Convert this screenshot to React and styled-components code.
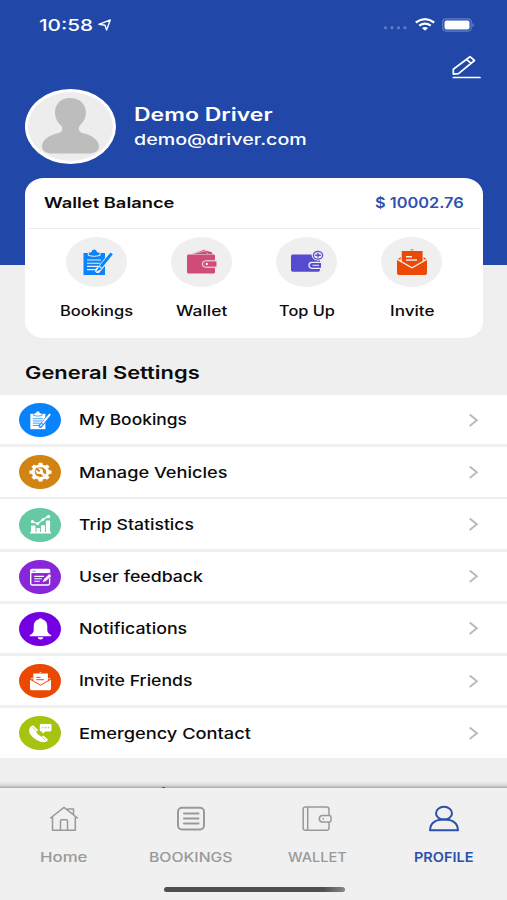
import React, { useLayoutEffect, useRef, useState } from "react";
import styled, { createGlobalStyle } from "styled-components";

const BLUE = "#2148a8";
const PAGE = "#efefef";

const GlobalStyle = createGlobalStyle`
  * { box-sizing: border-box; }
  html, body { margin: 0; padding: 0; overflow: hidden; }
  body { background: ${PAGE}; font-family: Inter, "Open Sans", sans-serif; color: #0b0b0b; }
  svg { display: block; flex: none; overflow: visible; }
`;

const Screen = styled.div`
  width: 507px;
  height: 900px;
  display: flex;
  flex-direction: column;
  overflow: hidden;
  background: ${PAGE};
`;

const TextBox = styled.span`
  display: block;
  flex: none;
  width: ${(p) => p.$width}px;
  height: ${(p) => p.$line || 20}px;
  line-height: ${(p) => p.$line || 20}px;
  font-size: ${(p) => p.$size}px;
  font-weight: ${(p) => p.$weight || 500};
  color: ${(p) => p.$color || "inherit"};
  white-space: nowrap;
`;

const TextRun = styled.span`
  display: inline-block;
  transform-origin: 0 50%;
`;

/* Widens a line of text so that it fills the given width. */
function WideText({ children, width, size, line, weight, color }) {
  const ref = useRef(null);
  const [scale, setScale] = useState(1);
  useLayoutEffect(() => {
    setScale(width / ref.current.offsetWidth);
  }, [width, children]);
  return (
    <TextBox $width={width} $size={size} $line={line} $weight={weight} $color={color}>
      <TextRun ref={ref} style={{ transform: `scaleX(${scale})` }}>{children}</TextRun>
    </TextBox>
  );
}

const Header = styled.header`
  flex: none;
  height: 264.5px;
  background: ${BLUE};
  color: #fff;
`;

const StatusBar = styled.div`
  height: 49px;
  padding: 0 32px 0 39px;
  display: flex;
  align-items: center;
  justify-content: space-between;
`;

const StatusGroup = styled.div`
  display: flex;
  align-items: center;
  gap: ${(p) => p.$gap}px;
`;

const EditRow = styled.div`
  height: 40px;
  padding: 6px 26px 0 0;
  display: flex;
  justify-content: flex-end;
`;

const ProfileRow = styled.div`
  display: flex;
  align-items: center;
  gap: 18px;
  padding-left: 25px;
`;

const Avatar = styled.div`
  width: 91px;
  height: 75px;
  border: 3px solid #fff;
  border-radius: 50%;
  background: #ededed;
  display: flex;
  justify-content: center;
  padding-top: 6px;
`;

const Identity = styled.div`
  display: flex;
  flex-direction: column;
  gap: 2px;
`;

const Card = styled.section`
  position: relative;
  flex: none;
  width: 458px;
  height: 160px;
  margin: -87px 0 0 25px;
  border-radius: 19px / 16px;
  background: #fff;
`;

const Balance = styled.div`
  height: 51px;
  margin: 0 3px;
  padding: 0 16px;
  display: flex;
  align-items: center;
  justify-content: space-between;
  border-bottom: 1px solid #ededed;
`;

const Actions = styled.div`
  display: grid;
  grid-template-columns: repeat(4, 105px);
  justify-content: center;
  padding-top: 8.5px;
`;

const Action = styled.div`
  display: flex;
  flex-direction: column;
  align-items: center;
  gap: 14px;
`;

const ActionDisc = styled.div`
  width: 61px;
  height: 50px;
  border-radius: 50%;
  background: #efefef;
  display: flex;
  align-items: center;
  justify-content: center;
  padding-left: ${(p) => p.$shift || 0}px;
`;

const SectionTitle = styled.h2`
  flex: none;
  height: 57.5px;
  margin: 0;
  padding: 25.5px 0 0 25px;
`;

const List = styled.div`
  flex: none;
  display: flex;
  flex-direction: column;
  gap: 2.8px;
`;

const Row = styled.div`
  height: 49.4px;
  padding: 0 28px 0 19px;
  display: flex;
  align-items: center;
  background: #fff;
`;

const RowLabel = styled.div`
  padding-top: 1.5px;
`;

const RowDisc = styled.div`
  width: 42px;
  height: 34px;
  margin: 1px 18px 0 0;
  border-radius: 50%;
  background: ${(p) => p.$color};
  display: flex;
  align-items: center;
  justify-content: center;
`;

const Spacer = styled.div`
  flex: 1;
`;

const ClippedSection = styled.div`
  flex: 1;
  background:
    linear-gradient(#555, #555) 162px 100% / 3px 1px no-repeat,
    linear-gradient(to bottom, transparent 23px, #dcdcdc 27px, #aaa 30px);
`;

const TabBar = styled.nav`
  flex: none;
  height: 112.5px;
  background: #f0f0f0;
`;

const Tabs = styled.div`
  display: grid;
  grid-template-columns: repeat(4, 1fr);
  height: 99px;
  padding-left: 1px;
`;

const Tab = styled.div`
  display: flex;
  flex-direction: column;
  align-items: center;
  gap: 15px;
  padding-top: 18px;
  color: ${(p) => (p.$active ? "#2b4fad" : "#999")};
`;

const HomeIndicator = styled.div`
  width: 181px;
  height: 5px;
  margin: 0 162px 0 164px;
  border-radius: 3px;
  background: linear-gradient(to right, #505050 88%, #888);
`;

function ClipboardIcon({ bg, ...rest }) {
  return (
    <svg viewBox="0 0 30 26" {...rest}>
      <path d="M.5 4H22V26H.5Z" fill="currentColor" />
      <path d="M5.3 6.5V3H8Q8.4 0 11.2 0T14.4 3H17V6.5Q11 8.2 5.3 6.5Z" fill="currentColor" stroke={bg} strokeWidth="1" />
      <path d="M4 11H18M4 14.2H17M4 17.4H15M4 20.6H12.5" stroke={bg} strokeWidth="1.1" />
      <path d="M29 4.5L15.8 20.5" stroke={bg} strokeWidth="5" />
      <circle cx="14.8" cy="21.3" r="2.8" fill={bg} />
      <path d="M28.7 4.4L17.8 17.8" stroke="currentColor" strokeWidth="3" />
      <path d="M16 17.8L18.4 20L13.2 22.8Z" fill="currentColor" />
    </svg>
  );
}

function PurseIcon({ bg, ...rest }) {
  return (
    <svg viewBox="0 0 30 26" {...rest}>
      <path d="M5 5L17.7 .6L20.5 5ZM18.5 1.5L25 3.3 25.3 5H21Z" fill="currentColor" />
      <path d="M6 4.8L19 1.5" stroke={bg} strokeWidth=".6" />
      <rect x="0" y="5.6" width="28" height="18.8" rx="1.5" fill="currentColor" />
      <path d="M30 11.8H18.5Q15.3 12 15.3 15T18.5 18.2H30Z" fill="currentColor" stroke={bg} strokeWidth="1" />
      <circle cx="19.8" cy="15" r="1.2" fill={bg} />
    </svg>
  );
}

function TopUpIcon({ bg, ...rest }) {
  return (
    <svg viewBox="0 0 30 26" {...rest}>
      <rect x="-1" y="5.5" width="29" height="17.2" rx="1.7" fill="currentColor" />
      <path d="M29 13.4H19.7Q17 13.6 17 16.3T19.7 19.3H29" fill="currentColor" stroke={bg} strokeWidth="1.3" />
      <path d="M20.5 16.3H27" stroke={bg} strokeWidth="1" />
      <ellipse cx="26" cy="6.2" rx="6.4" ry="5.5" fill={bg} />
      <ellipse cx="26" cy="6.2" rx="4.6" ry="3.9" fill="none" stroke="currentColor" strokeWidth="1.3" />
      <path d="M23.2 6.2H28.8M26 3.8V8.6" stroke="currentColor" strokeWidth="1.4" />
    </svg>
  );
}

function InviteIcon({ bg, ...rest }) {
  return (
    <svg viewBox="0 0 30 26" {...rest}>
      <path d="M13 1.3Q15 -.7 17 1.3ZM4.7 2H25.6V13L15 19L4.7 13Z" fill="currentColor" />
      <path d="M9 7.7H15M9 11H20" stroke={bg} strokeWidth="1.4" />
      <path d="M3.7 8L.3 10.5H3.7ZM26.6 8L30 10.5H26.6Z" fill="currentColor" />
      <path d="M0 10.7L15 19.2L30 10.7V24Q30 26 28 26H2Q0 26 0 24Z" fill="currentColor" />
      <path d="M.5 10.5L15 18.7L29.5 10.5" fill="none" stroke={bg} strokeWidth="1.2" />
    </svg>
  );
}

function GearIcon({ bg, ...rest }) {
  return (
    <svg viewBox="0 0 30 26" {...rest}>
      <g transform="translate(15 13) scale(1.18 1)">
        {[0, 45, 90, 135, 180, 225, 270, 315].map((a) => (
          <path key={a} transform={`rotate(${a})`} d="M-3 -8L-2.3 -13.3H2.3L3 -8Z" fill="currentColor" />
        ))}
        <circle r="10.7" fill="currentColor" />
        <circle r="7" fill={bg} />
        <path d="M-1 -1L6.5 6.5" stroke="currentColor" strokeWidth="3.4" />
        <circle cx="-1.3" cy="-1.3" r="4.2" fill="currentColor" />
        <path d="M-1 -1L-5.5 -5.5" stroke={bg} strokeWidth="2.6" />
      </g>
    </svg>
  );
}

function StatsIcon({ bg, ...rest }) {
  return (
    <svg viewBox="0 0 30 26" {...rest} fill="currentColor">
      <path d="M0 24.4H30V26.6H0ZM1.5 15H7.8V25H1.5ZM9.2 18.5H14.4V25H9.2ZM15.7 14.5H21.3V25H15.7ZM22.7 8H28.7V25H22.7Z" />
      <path d="M3.5 9.5L11 12.5L18.5 6.5L26 2" fill="none" stroke="currentColor" strokeWidth="1.8" />
      <circle cx="3.5" cy="9.5" r="2.3" /><circle cx="11" cy="12.5" r="2" />
      <circle cx="18.5" cy="6.5" r="2" /><circle cx="26.5" cy="2.2" r="2.4" />
    </svg>
  );
}

function FeedbackIcon({ bg, ...rest }) {
  return (
    <svg viewBox="0 0 30 26" {...rest} fill="none" stroke="currentColor">
      <rect x="1" y="2" width="27" height="22.3" rx="2" strokeWidth="2" />
      <path d="M1 5H28" strokeWidth="4.5" />
      <path d="M3.5 4.5H8" stroke={bg} strokeWidth="1" />
      <path d="M6 12H20M6 15.5H17M6 19H14" strokeWidth="1.5" />
      <path d="M30 8.5L19 19" stroke={bg} strokeWidth="6" />
      <path d="M29 10L21 17.5" strokeWidth="4" />
      <path d="M21 15L23.3 18.5L17.5 20Z" fill="currentColor" stroke="none" />
    </svg>
  );
}

function BellIcon({ bg, ...rest }) {
  return (
    <svg viewBox="0 0 30 26" {...rest} fill="currentColor">
      <path d="M12.3 -1.2A3 2.5 0 0 1 17.7 -1.2Q24.5 .8 24.7 8.5V14.5Q25 19 30.3 21.5V23.4H-.3V21.5Q5 19 5.3 14.5V8.5Q5.5 .8 12.3 -1.2ZM11 24.5H19Q18.5 28 15 28T11 24.5Z" />
    </svg>
  );
}

function CallIcon({ bg, ...rest }) {
  return (
    <svg viewBox="0 0 30 26" {...rest} fill="currentColor">
      <path d="M1.8 3L4.5 1.8L11.8 8.8L9.2 10.8Q9 14 16.3 18.2L19.2 16.4L26 23Q22.3 27.7 15 25.5Q4 21.5 -.7 13Q-2.7 7 1.8 3Z" />
      <path d="M3.4 4.5L9.4 10.5M16.8 18.2L22.8 24" stroke={bg} strokeWidth=".9" />
      <path d="M15.5 0H29Q30.7 0 30.7 2V8.7Q30.7 10.7 29 10.7H22L17.5 14V10.7H15.5Q14 10.7 14 8.7V2Q14 0 15.5 0Z" />
      <path d="M17.5 5.3H19.5M21.5 5.3H23.5M25.5 5.3H27.5" stroke={bg} strokeWidth="1.4" />
    </svg>
  );
}

function LocationIcon() {
  return (
    <svg width="14" height="12" viewBox="0 0 14 12">
      <path d="M1 5.3L12.3 .9L8.6 10.9L7 6.2Z" fill="none" stroke="#fff" strokeWidth="1.4" strokeLinejoin="round" />
    </svg>
  );
}

function SignalDots() {
  return (
    <svg width="25" height="5" viewBox="0 0 25 5" fill="#5877c0">
      <circle cx="2.5" cy="5.7" r="1.7" /><circle cx="9" cy="5.7" r="1.7" />
      <circle cx="15.5" cy="5.7" r="1.7" /><circle cx="22" cy="5.7" r="1.7" />
    </svg>
  );
}

function WifiIcon() {
  return (
    <svg width="20" height="13" viewBox="0 0 20 13" fill="none" stroke="#fff" strokeWidth="2.2">
      <path d="M.8 4.5Q10 -2.3 19.2 4.5M4.2 7.7Q10 3.5 15.8 7.7" />
      <path d="M7 10Q10 7.8 13 10L10 12.8Z" fill="#fff" stroke="none" />
    </svg>
  );
}

function BatteryIcon() {
  return (
    <svg width="33" height="14" viewBox="0 0 33 14">
      <rect x=".7" y=".9" width="28.5" height="12.2" rx="3.5" fill="none" stroke="#6380c6" strokeWidth="1.2" />
      <rect x="2.5" y="2.4" width="25" height="9.2" rx="2" fill="#fff" />
      <path d="M30.5 4.7Q33 7 30.5 9.3Z" fill="#7890cc" />
    </svg>
  );
}

function EditIcon() {
  return (
    <svg width="29" height="25" viewBox="0 0 29 25" fill="none" stroke="#fff" strokeWidth="1.7" strokeLinejoin="round" strokeLinecap="round">
      <path d="M1.3 19.2V14.2L18 1.7L22.5 5.5L6.5 18.7ZM14.5 4.3L19 8.3M1.3 22.5H28" />
    </svg>
  );
}

function PersonShape() {
  return (
    <svg width="59" height="57" viewBox="0 0 59 57">
      <path d="M29 0C38 0 45 6 45 14.5C45 21 41 25.5 38.3 28C37 32 38.5 34 42 35.2C51 37 58 42 58 48.5C58 53 54 55.5 47 55.5H12C5 55.5 1 53 1 48.5C1 42 8 37 17 35.2C21 34 22.5 32 20.5 28C17 25 14 20.5 14 14.5C14 6 20 0 29 0Z" fill="#bdbdbd" />
    </svg>
  );
}

function Chevron() {
  return (
    <svg width="11" height="14" viewBox="0 0 11 14">
      <path d="M1.7 1.5L8.9 7.2L1.7 13" fill="none" stroke="#b8b8b8" strokeWidth="1.8" />
    </svg>
  );
}

const tabIconProps = { width: 30, height: 26, viewBox: "0 0 30 26", fill: "none", stroke: "currentColor" };

function HomeIcon() {
  return (
    <svg {...tabIconProps} strokeWidth="1.5" strokeLinejoin="round" strokeLinecap="round">
      <path d="M1.5 12L15 1.3L28.5 12M3.5 10.5V24.3H26.3V10.5M11.5 24V15Q11.5 13.8 12.7 13.8H17.3Q18.5 13.8 18.5 15V24M19 4.3V3H24.5V8.5" />
    </svg>
  );
}

function ListIcon() {
  return (
    <svg {...tabIconProps} strokeWidth="2">
      <rect x="2" y="1.7" width="26" height="21.8" rx="4" />
      <path d="M8 7.4H22.5M8 12.5H22.5M8 17.6H22.5" strokeLinecap="round" />
    </svg>
  );
}

function WalletIcon() {
  return (
    <svg {...tabIconProps} strokeWidth="1.5">
      <path d="M27 9.5V3.5Q27 1 24.5 1H3.5Q1.2 1 1.2 3V22.3Q1.2 24.3 3.5 24.3H24.5Q27 24.3 27 22V16M5.7 1V24.3" />
      <path d="M20.5 9.5H27.3Q29 9.5 29 11V14.5Q29 16 27.3 16H20.5Q17.3 15.8 17.3 12.7T20.5 9.5Z" />
      <path d="M20.5 12.7H22" />
    </svg>
  );
}

function UserIcon() {
  return (
    <svg {...tabIconProps} strokeWidth="2" strokeLinejoin="round">
      <ellipse cx="15" cy="7.2" rx="8" ry="6.4" />
      <path d="M1 24.3Q1.5 13.6 15 13.6T29 24.3Z" />
    </svg>
  );
}

const actions = [
  { label: "Bookings", width: 73, color: "#0b83fb", Icon: ClipboardIcon, shift: 3 },
  { label: "Wallet", width: 51, color: "#d04b78", Icon: PurseIcon },
  { label: "Top Up", width: 56, color: "#554bd0", Icon: TopUpIcon },
  { label: "Invite", width: 44, color: "#eb4a06", Icon: InviteIcon },
];

const settings = [
  { label: "My Bookings", width: 108, color: "#0983fc", Icon: ClipboardIcon },
  { label: "Manage Vehicles", width: 149, color: "#d28413", Icon: GearIcon },
  { label: "Trip Statistics", width: 115, color: "#65c9a3", Icon: StatsIcon },
  { label: "User feedback", width: 124, color: "#8727d9", Icon: FeedbackIcon },
  { label: "Notifications", width: 108, color: "#7400e2", Icon: BellIcon },
  { label: "Invite Friends", width: 113, color: "#eb4803", Icon: InviteIcon },
  { label: "Emergency Contact", width: 171.5, color: "#a4c40f", Icon: CallIcon },
];

const tabs = [
  { label: "Home", width: 48, Icon: HomeIcon },
  { label: "BOOKINGS", width: 83, Icon: ListIcon },
  { label: "WALLET", width: 59, Icon: WalletIcon },
  { label: "PROFILE", width: 60, Icon: UserIcon, active: true },
];

export default function App() {
  return (
    <Screen>
      <GlobalStyle />
      <Header>
        <StatusBar>
          <StatusGroup $gap={5}>
            <WideText width={54} size={16.5} weight={500}>10:58</WideText>
            <LocationIcon />
          </StatusGroup>
          <StatusGroup $gap={7}>
            <SignalDots />
            <WifiIcon />
            <BatteryIcon />
          </StatusGroup>
        </StatusBar>
        <EditRow><EditIcon /></EditRow>
        <ProfileRow>
          <Avatar><PersonShape /></Avatar>
          <Identity>
            <WideText width={138} size={18} line={23} weight={600}>Demo Driver</WideText>
            <WideText width={173} size={15} line={23}>demo@driver.com</WideText>
          </Identity>
        </ProfileRow>
      </Header>
      <Card>
        <Balance>
          <WideText width={131} size={14} weight={600}>Wallet Balance</WideText>
          <WideText width={89} size={14.5} weight={600} color="#2c52ae">$ 10002.76</WideText>
        </Balance>
        <Actions>
          {actions.map(({ label, width, color, Icon, shift }) => (
            <Action key={label}>
              <ActionDisc $shift={shift}><Icon bg="#efefef" color={color} width="30" height="26" /></ActionDisc>
              <WideText width={width} size={14}>{label}</WideText>
            </Action>
          ))}
        </Actions>
      </Card>
      <SectionTitle>
        <WideText width={175} size={17.5} weight={600}>General Settings</WideText>
      </SectionTitle>
      <List>
        {settings.map(({ label, width, color, Icon }) => (
          <Row key={label}>
            <RowDisc $color={color}><Icon bg={color} color="#fff" width="21" height="18.2" /></RowDisc>
            <RowLabel><WideText width={width} size={15}>{label}</WideText></RowLabel>
            <Spacer />
            <Chevron />
          </Row>
        ))}
      </List>
      <ClippedSection />
      <TabBar>
        <Tabs>
          {tabs.map(({ label, width, Icon, active }) => (
            <Tab key={label} $active={active}>
              <Icon />
              <WideText width={width} size={13.3} weight={active ? 600 : 500}>{label}</WideText>
            </Tab>
          ))}
        </Tabs>
        <HomeIndicator />
      </TabBar>
    </Screen>
  );
}
